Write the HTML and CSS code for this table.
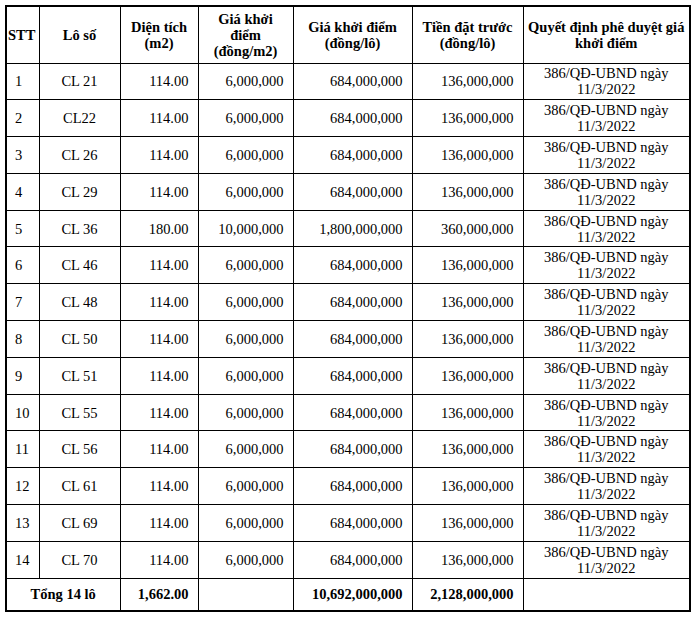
FILE: index.html
```html
<!DOCTYPE html>
<html lang="vi">
<head>
<meta charset="utf-8">
<title>Bảng giá khởi điểm</title>
<link rel="stylesheet" href="styles.css">
</head>
<body>
<div class="wrap">
<table class="tbl">
  <colgroup>
    <col class="c-stt"><col class="c-lo"><col class="c-dt"><col class="c-gm"><col class="c-gl"><col class="c-td"><col class="c-qd">
  </colgroup>
  <thead>
    <tr class="head">
      <th class="stt-h">STT</th>
      <th>Lô số</th>
      <th>Diện tích<br>(m2)</th>
      <th>Giá khởi<br>điểm<br>(đồng/m2)</th>
      <th>Giá khởi điểm<br>(đồng/lô)</th>
      <th>Tiền đặt trước<br>(đồng/lô)</th>
      <th>Quyết định phê duyệt giá<br>khởi điểm</th>
    </tr>
  </thead>
  <tbody>
    <tr><td class="stt">1</td><td class="ctr">CL 21</td><td class="num">114.00</td><td class="num">6,000,000</td><td class="num">684,000,000</td><td class="num">136,000,000</td><td class="qd">386/QĐ-UBND ngày<br>11/3/2022</td></tr>
    <tr><td class="stt">2</td><td class="ctr">CL22</td><td class="num">114.00</td><td class="num">6,000,000</td><td class="num">684,000,000</td><td class="num">136,000,000</td><td class="qd">386/QĐ-UBND ngày<br>11/3/2022</td></tr>
    <tr><td class="stt">3</td><td class="ctr">CL 26</td><td class="num">114.00</td><td class="num">6,000,000</td><td class="num">684,000,000</td><td class="num">136,000,000</td><td class="qd">386/QĐ-UBND ngày<br>11/3/2022</td></tr>
    <tr><td class="stt">4</td><td class="ctr">CL 29</td><td class="num">114.00</td><td class="num">6,000,000</td><td class="num">684,000,000</td><td class="num">136,000,000</td><td class="qd">386/QĐ-UBND ngày<br>11/3/2022</td></tr>
    <tr><td class="stt">5</td><td class="ctr">CL 36</td><td class="num">180.00</td><td class="num">10,000,000</td><td class="num">1,800,000,000</td><td class="num">360,000,000</td><td class="qd">386/QĐ-UBND ngày<br>11/3/2022</td></tr>
    <tr><td class="stt">6</td><td class="ctr">CL 46</td><td class="num">114.00</td><td class="num">6,000,000</td><td class="num">684,000,000</td><td class="num">136,000,000</td><td class="qd">386/QĐ-UBND ngày<br>11/3/2022</td></tr>
    <tr><td class="stt">7</td><td class="ctr">CL 48</td><td class="num">114.00</td><td class="num">6,000,000</td><td class="num">684,000,000</td><td class="num">136,000,000</td><td class="qd">386/QĐ-UBND ngày<br>11/3/2022</td></tr>
    <tr><td class="stt">8</td><td class="ctr">CL 50</td><td class="num">114.00</td><td class="num">6,000,000</td><td class="num">684,000,000</td><td class="num">136,000,000</td><td class="qd">386/QĐ-UBND ngày<br>11/3/2022</td></tr>
    <tr><td class="stt">9</td><td class="ctr">CL 51</td><td class="num">114.00</td><td class="num">6,000,000</td><td class="num">684,000,000</td><td class="num">136,000,000</td><td class="qd">386/QĐ-UBND ngày<br>11/3/2022</td></tr>
    <tr><td class="stt">10</td><td class="ctr">CL 55</td><td class="num">114.00</td><td class="num">6,000,000</td><td class="num">684,000,000</td><td class="num">136,000,000</td><td class="qd">386/QĐ-UBND ngày<br>11/3/2022</td></tr>
    <tr><td class="stt">11</td><td class="ctr">CL 56</td><td class="num">114.00</td><td class="num">6,000,000</td><td class="num">684,000,000</td><td class="num">136,000,000</td><td class="qd">386/QĐ-UBND ngày<br>11/3/2022</td></tr>
    <tr><td class="stt">12</td><td class="ctr">CL 61</td><td class="num">114.00</td><td class="num">6,000,000</td><td class="num">684,000,000</td><td class="num">136,000,000</td><td class="qd">386/QĐ-UBND ngày<br>11/3/2022</td></tr>
    <tr><td class="stt">13</td><td class="ctr">CL 69</td><td class="num">114.00</td><td class="num">6,000,000</td><td class="num">684,000,000</td><td class="num">136,000,000</td><td class="qd">386/QĐ-UBND ngày<br>11/3/2022</td></tr>
    <tr><td class="stt">14</td><td class="ctr">CL 70</td><td class="num">114.00</td><td class="num">6,000,000</td><td class="num">684,000,000</td><td class="num">136,000,000</td><td class="qd">386/QĐ-UBND ngày<br>11/3/2022</td></tr>
    <tr class="total"><td colspan="2" class="ctr">Tổng 14 lô</td><td class="num">1,662.00</td><td></td><td class="num">10,692,000,000</td><td class="num">2,128,000,000</td><td></td></tr>
  </tbody>
</table>
</div>
</body>
</html>
```
FILE: styles.css
```css
html, body {
  margin: 0;
  padding: 0;
  background: #fff;
}
.wrap {
  padding: 5px 0 0 5px;
}
.tbl {
  border-collapse: collapse;
  table-layout: fixed;
  width: 684px;
  font-family: "Liberation Serif", "Times New Roman", serif;
  font-size: 14.5px;
  color: #000;
  border: 2px solid #000;
}
.c-stt { width: 33px; }
.c-lo { width: 81px; }
.c-dt { width: 78px; }
.c-gm { width: 95px; }
.c-gl { width: 119px; }
.c-td { width: 111px; }
.c-qd { width: 167px; }
.tbl th, .tbl td {
  border: 1.5px solid #000;
  padding: 0;
  vertical-align: middle;
  line-height: 16px;
}
.tbl th {
  font-weight: bold;
  text-align: center;
}
.head { height: 57px; }
.tbl th.stt-h { text-align: left; padding-left: 1px; }
.tbl tbody tr { height: 36.8px; }
.tbl tbody tr.total { height: 33px; }
.tbl td.stt { text-align: left; padding-left: 8px; }
.tbl td.ctr { text-align: center; }
.tbl td.num { text-align: right; padding-right: 9px; }
.tbl td.qd { text-align: center; }
.total td { font-weight: bold; }
```
